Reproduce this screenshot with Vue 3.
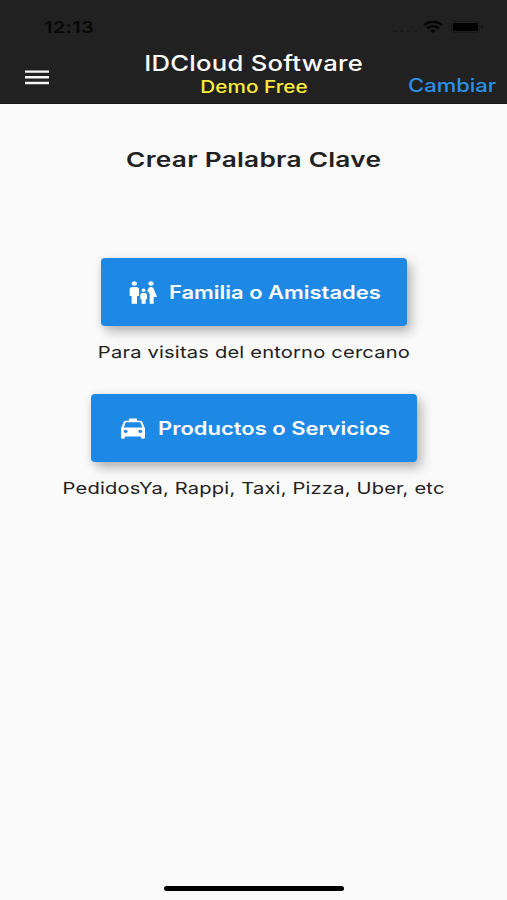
<template>
  <div class="screen">
    <!-- Barra de estado del teléfono -->
    <div class="status-bar">
      <span class="wide time">12:13</span>
      <div class="status-icons">
        <span class="signal"><i v-for="n in 4" :key="n"></i></span>
        <svg class="wifi" viewBox="0 0 20 12" preserveAspectRatio="none">
          <path d="M1 4.2C6-.4 14-.4 19 4.2" />
          <path d="M4.2 7.3c3.4-2.9 8.2-2.9 11.6 0" />
          <path class="dot" d="M7 9.5c1.8-1.4 4.2-1.4 6 0L10 12z" />
        </svg>
        <span class="battery"><i></i></span>
        <span class="battery-tip"></span>
      </div>
    </div>

    <!-- Cabecera con menú, título y acción -->
    <header class="app-bar">
      <button class="menu-btn" aria-label="Menú" @click="menuOpen = !menuOpen">
        <svg viewBox="0 0 24 15">
          <path d="M0 1.6h24M0 7.3h24M0 13h24" />
        </svg>
      </button>
      <div class="titles">
        <span class="wide title">IDCloud Software</span>
        <span class="wide plan">Demo Free</span>
      </div>
      <button class="switch-btn"><span class="wide">Cambiar</span></button>
    </header>

    <main class="content">
      <h1><span class="wide">Crear Palabra Clave</span></h1>

      <section v-for="option in options" :key="option.id" class="option">
        <button class="option-btn" :class="option.id">
          <svg viewBox="0 0 24 24" preserveAspectRatio="none">
            <path :d="option.icon" />
          </svg>
          <span class="label"><span class="wide">{{ option.label }}</span></span>
        </button>
        <p><span class="wide">{{ option.hint }}</span></p>
      </section>
    </main>

    <div class="home-indicator"></div>
  </div>
</template>

<script setup>
import { ref } from 'vue';

const menuOpen = ref(false);

// Tipos de palabra clave que se pueden crear
const options = [
  {
    id: 'family',
    label: 'Familia o Amistades',
    hint: 'Para visitas del entorno cercano',
    icon: 'M16 4c0-1.11.89-2 2-2s2 .89 2 2-.89 2-2 2-2-.89-2-2zm4 18v-6h2.5l-2.54-7.63C19.68 7.55 18.92 7 18.06 7h-.12c-.86 0-1.63.55-1.9 1.37l-.86 2.58c1.08.6 1.82 1.73 1.82 3.05v8h3zm-7.5-10.5c.83 0 1.5-.67 1.5-1.5s-.67-1.5-1.5-1.5S11 9.17 11 10s.67 1.5 1.5 1.5zM5.5 6c1.11 0 2-.89 2-2s-.89-2-2-2-2 .89-2 2 .89 2 2 2zm2 16v-7H9V9c0-1.1-.9-2-2-2H4c-1.1 0-2 .9-2 2v6h1.5v7h4zm6.5 0v-4h1v-4c0-.82-.68-1.5-1.5-1.5h-2c-.82 0-1.5.68-1.5 1.5v4h1v4h3z',
  },
  {
    id: 'services',
    label: 'Productos o Servicios',
    hint: 'PedidosYa, Rappi, Taxi, Pizza, Uber, etc',
    icon: 'M18.92 6.01C18.72 5.42 18.16 5 17.5 5H15V3H9v2H6.5c-.66 0-1.21.42-1.42 1.01L3 12v8c0 .55.45 1 1 1h1c.55 0 1-.45 1-1v-1h12v1c0 .55.45 1 1 1h1c.55 0 1-.45 1-1v-8l-2.08-5.99zM6.5 16c-.83 0-1.5-.67-1.5-1.5S5.67 13 6.5 13s1.5.67 1.5 1.5S7.33 16 6.5 16zm11 0c-.83 0-1.5-.67-1.5-1.5s.67-1.5 1.5-1.5 1.5.67 1.5 1.5-.67 1.5-1.5 1.5zM5 11l1.5-4.5h11L19 11H5z',
  },
];
</script>

<style>
body {
  margin: 0;
}
</style>

<style scoped>
.screen {
  width: 507px;
  height: 900px;
  display: flex;
  flex-direction: column;
  align-items: center;
  overflow: hidden;
  background: #fafafa;
  color: #212121;
  font-family: Inter, "Liberation Sans", sans-serif;
}

button {
  border: 0;
  padding: 0;
  background: none;
  font: inherit;
  color: inherit;
  cursor: pointer;
}

/* Letra ensanchada en horizontal */
.wide {
  display: inline-block;
  white-space: nowrap;
  transform: scaleX(1.22);
}

/* Barra de estado */
.status-bar {
  width: 100%;
  height: 52px;
  box-sizing: border-box;
  padding: 2px 24px 0 44px;
  display: flex;
  justify-content: space-between;
  align-items: center;
  background: #212121;
  color: #080808;
}

.time {
  font-size: 16.5px;
  font-weight: 600;
  letter-spacing: 0.2px;
  transform-origin: left;
}

.status-icons {
  display: flex;
  align-items: center;
}

.signal {
  display: flex;
  gap: 3px;
  margin: 7px 5px 0 0;
}

.signal i {
  width: 4px;
  height: 2px;
  background: #1a1a1a;
}

.wifi {
  width: 20px;
  height: 12px;
  margin-right: 8px;
  fill: none;
  stroke: #050505;
  stroke-width: 2.4;
}

.wifi .dot {
  fill: #050505;
  stroke: none;
}

.battery {
  width: 29px;
  height: 12px;
  box-sizing: border-box;
  padding: 1px;
  border: 1px solid #191919;
  border-radius: 4px;
}

.battery i {
  display: block;
  height: 100%;
  border-radius: 2px;
  background: #000;
}

.battery-tip {
  width: 2px;
  height: 4px;
  margin-left: 1px;
  border-radius: 0 2px 2px 0;
  background: #171717;
}

/* Cabecera */
.app-bar {
  width: 100%;
  height: 52px;
  box-sizing: border-box;
  display: grid;
  grid-template-columns: 110px 1fr 110px;
  background: #212121;
  border-bottom: 1px solid #161616;
}

.menu-btn {
  width: 24px;
  height: 15px;
  margin: 18px 0 0 25px;
}

.menu-btn svg {
  display: block;
  width: 24px;
  height: 15px;
  stroke: #f5f5f5;
  stroke-width: 2.4;
}

.titles {
  display: flex;
  flex-direction: column;
  align-items: center;
}

.title {
  color: #fff;
  font-size: 21px;
  font-weight: 500;
  line-height: 24px;
  letter-spacing: 0.22px;
}

.plan {
  color: #ffeb3b;
  font-size: 17px;
  font-weight: 500;
  line-height: 22px;
}

.switch-btn {
  height: 24px;
  margin: 22px 11px 0 0;
  text-align: right;
  color: #2b90e6;
  font-size: 18px;
  font-weight: 500;
  line-height: 24px;
}

.switch-btn .wide {
  transform-origin: right;
}

/* Contenido */
.content {
  flex: 1;
  display: flex;
  flex-direction: column;
  align-items: center;
}

h1 {
  margin: 43px 0 86px;
  font-size: 20.5px;
  font-weight: 600;
  line-height: 25px;
  letter-spacing: 0.2px;
}

h1 .wide {
  transform: scaleX(1.28);
}

.option {
  display: flex;
  flex-direction: column;
  align-items: center;
  height: 136px;
}

.option-btn {
  height: 68px;
  box-sizing: border-box;
  padding: 0 26px;
  display: flex;
  align-items: center;
  border-radius: 4px;
  background: #1e88e5;
  color: #fff;
  font-size: 18px;
  font-weight: 600;
  box-shadow: 5px 6px 12px rgba(0, 0, 0, 0.24), 0 2px 8px rgba(0, 0, 0, 0.1);
}

.option-btn.family {
  width: 306px;
}

.option-btn.services {
  width: 326px;
}

.option-btn svg {
  width: 32px;
  height: 27px;
  fill: #fff;
}

.option-btn .label {
  flex: 1;
  padding-left: 10px;
  text-align: center;
}

.option p {
  margin: 14px 0 0;
  font-size: 16.5px;
  line-height: 25px;
  letter-spacing: 0.15px;
}

/* Indicador inferior */
.home-indicator {
  width: 180px;
  height: 5px;
  margin-bottom: 9px;
  border-radius: 3px;
  background: #000;
}
</style>
